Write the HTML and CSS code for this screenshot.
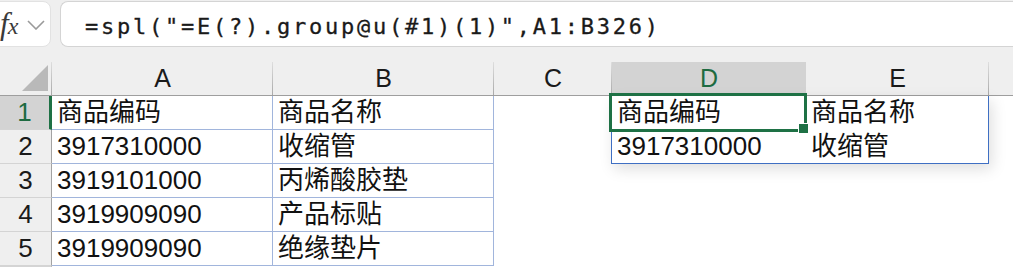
FILE: index.html
```html
<!DOCTYPE html>
<html lang="zh-CN">
<head>
    <meta charset="UTF-8">
    <title>Sheet</title>
    <link rel="stylesheet" href="styles.css">
</head>
<body>
    <div class="formula-bar">
        <div class="fx-box">
            <span class="fx">f<span class="fx-sub">x</span></span>
            <svg class="chevron" width="18" height="10" viewBox="0 0 18 10"><path d="M1 1 L9 9 L17 1" fill="none" stroke="#9a9a9a" stroke-width="1.6"/></svg>
        </div>
        <div class="formula-input">=spl("=E(?).group@u(#1)(1)",A1:B326)</div>
    </div>

    <div class="sheet">
        <!-- spilled result D1:E2 -->
        <div class="spill">
            <div class="scell active">商品编码</div>
            <div class="scell">商品名称</div>
            <div class="scell">3917310000</div>
            <div class="scell">收缩管</div>
        </div>

        <div class="corner">
            <svg width="51" height="33" viewBox="0 0 51 33"><polygon points="22,29 48,29 48,3" fill="#b9b9b9"/></svg>
        </div>
        <div class="col-head">A</div>
        <div class="col-head">B</div>
        <div class="col-head">C</div>
        <div class="col-head sel">D</div>
        <div class="col-head">E</div>
        <div class="col-head last"></div>

        <div class="row-head sel">1</div>
        <div class="cell ab">商品编码</div>
        <div class="cell ab">商品名称</div>
        <div class="cell"></div>
        <div class="cell"></div>

        <div class="row-head">2</div>
        <div class="cell ab">3917310000</div>
        <div class="cell ab">收缩管</div>
        <div class="cell"></div>
        <div class="cell"></div>

        <div class="row-head">3</div>
        <div class="cell ab">3919101000</div>
        <div class="cell ab">丙烯酸胶垫</div>
        <div class="cell"></div>
        <div class="cell"></div>
        <div class="cell"></div>
        <div class="cell"></div>

        <div class="row-head">4</div>
        <div class="cell ab">3919909090</div>
        <div class="cell ab">产品标贴</div>
        <div class="cell"></div>
        <div class="cell"></div>
        <div class="cell"></div>
        <div class="cell"></div>

        <div class="row-head">5</div>
        <div class="cell ab">3919909090</div>
        <div class="cell ab">绝缘垫片</div>
        <div class="cell"></div>
        <div class="cell"></div>
        <div class="cell"></div>
        <div class="cell"></div>

        <div class="row-head"></div>
        <div class="cell"></div>
        <div class="cell"></div>
        <div class="cell"></div>
        <div class="cell"></div>
        <div class="cell"></div>
        <div class="cell"></div>
    </div>
</body>
</html>
```

FILE: styles.css
```css
* {
    box-sizing: border-box;
}

body {
    margin: 0;
    width: 1013px;
    height: 267px;
    overflow: hidden;
    background: #ffffff;
    color: #111111;
    font-family: "Liberation Sans", "Noto Sans CJK SC", sans-serif;
}

/* formula bar */
.formula-bar {
    display: flex;
    gap: 9px;
    height: 62px;
    padding-top: 1px;
    background: #efefef;
}

.fx-box {
    display: flex;
    align-items: center;
    width: 71px;
    height: 46px;
    margin-left: -20px;
    padding-left: 19px;
    padding-right: 5px;
    background: #ffffff;
    border: 1px solid #e2e2e2;
    border-radius: 8px;
}

.fx {
    font-family: "Liberation Serif", serif;
    font-style: italic;
    font-size: 31px;
    line-height: 46px;
    color: #3a3a3a;
    padding-top: 2px;
}

.fx-sub {
    font-size: 24px;
    margin-left: -1px;
}

.chevron {
    margin-left: auto;
    margin-top: 2px;
}

.formula-input {
    flex: 1;
    height: 46px;
    padding-left: 24px;
    padding-top: 4px;
    background: #ffffff;
    border: 1px solid #d4d4d4;
    border-right: none;
    border-radius: 8px 0 0 8px;
    font-family: "DejaVu Sans Mono", monospace;
    font-size: 22px;
    letter-spacing: 2.75px;
    line-height: 42px;
    color: #1a1a1a;
    -webkit-text-stroke: 0.3px #1a1a1a;
    white-space: nowrap;
}

/* grid */
.sheet {
    display: grid;
    grid-template-columns: 52px 221px 221px 118px 194px 183px 1fr;
    grid-template-rows: repeat(6, 34px) 1px;
    font-size: 26px;
    line-height: 33px;
}

.corner,
.col-head {
    background: linear-gradient(#dedede, #a9a9a9) right / 1px 100% no-repeat, #efefef;
    border-bottom: 1px solid #9e9e9e;
}

.col-head {
    text-align: center;
    font-size: 25px;
    color: #1a1a1a;
}

.col-head.last {
    background: #efefef;
}

.col-head.sel {
    background: #d3d3d3;
    color: #1e6b41;
    border-bottom: 3px solid #1e7145;
    line-height: 32px;
}

.row-head {
    background: #efefef;
    border-right: 1px solid #a3a3a3;
    border-bottom: 1px solid #d4d4d4;
    text-align: center;
    color: #1a1a1a;
}

.row-head.sel {
    background: #d3d3d3;
    color: #1e6b41;
    border-right: 3px solid #1e7145;
}

.cell {
    padding-left: 5px;
    white-space: nowrap;
}

.cell.ab {
    border-right: 1px solid #a1b5dc;
    border-bottom: 1px solid #a1b5dc;
}

/* spill range D1:E2 */
.spill {
    grid-column: 5 / 7;
    grid-row: 2 / 4;
    display: grid;
    grid-template-columns: 194px 1fr;
    grid-template-rows: 34px 33px;
    margin-left: -1px;
    background: #ffffff;
    border: 1px solid #3f6fc3;
    border-top: none;
    box-shadow: 3px 5px 14px rgba(0, 0, 0, 0.13);
    position: relative;
    z-index: 2;
}

.scell {
    padding-left: 5px;
    white-space: nowrap;
}

.scell.active {
    position: relative;
}

.scell.active::before {
    content: "";
    position: absolute;
    left: -3px;
    top: -3px;
    right: -1px;
    bottom: -2px;
    border: 3px solid #1e7145;
}

.scell.active::after {
    content: "";
    position: absolute;
    right: -3px;
    bottom: -4px;
    width: 9px;
    height: 9px;
    background: #1e7145;
    border: 1px solid #ffffff;
}
```
